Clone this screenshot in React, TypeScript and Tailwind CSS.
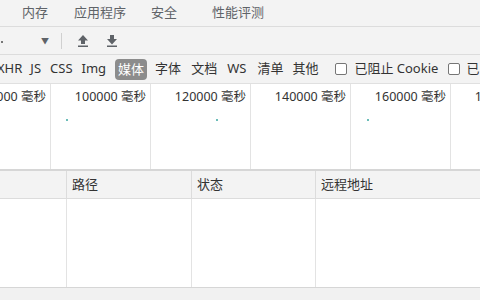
import React from 'react';

const font = { fontFamily: '"Noto Sans", "Noto Sans CJK SC", sans-serif' };

const ticks = ['80000 毫秒', '100000 毫秒', '120000 毫秒', '140000 毫秒', '160000 毫秒', '180000 毫秒'];

const Upload = () => (
  <svg width="12" height="13" viewBox="0 0 12 13" className="text-[#5f6368]">
    <path d="M6 1 L11 6.5 H8 V10 H4 V6.5 H1 Z" fill="currentColor" />
    <rect x="1" y="11.5" width="10" height="1.5" fill="currentColor" />
  </svg>
);

const Download = () => (
  <svg width="12" height="13" viewBox="0 0 12 13" className="text-[#5f6368]">
    <path d="M6 10.5 L11 5 H8 V1 H4 V5 H1 Z" fill="currentColor" />
    <rect x="1" y="11.5" width="10" height="1.5" fill="currentColor" />
  </svg>
);

const Checkbox = () => (
  <span className="inline-block w-[12px] h-[12px] rounded-[2px] border border-[#767676] bg-white" />
);

export default function App() {
  return (
    <div className="relative w-[480px] h-[300px] overflow-hidden bg-[#f3f3f3] text-[13px] text-[#333] flex flex-col" style={font}>
      {/* tabs */}
      <div className="h-[27px] shrink-0 flex items-center border-b border-[#dcdcdc] text-[#5f6368]">
        <span className="ml-[22px]">内存</span>
        <span className="ml-[26px]">应用程序</span>
        <span className="ml-[25px]">安全</span>
        <span className="ml-[35px]">性能评测</span>
      </div>

      {/* toolbar */}
      <div className="h-[28px] shrink-0 flex items-center border-b border-[#dcdcdc]">
        <span className="ml-[1px] w-[2px] h-[2px] bg-[#777] self-center mt-[2px]" />
        <span className="ml-[38px] text-[8px] text-[#5f6368]">▼</span>
        <span className="ml-[12px] w-px h-[16px] bg-[#d0d0d0]" />
        <span className="ml-[15px] flex"><Upload /></span>
        <span className="ml-[17px] flex"><Download /></span>
      </div>

      {/* filters */}
      <div className="h-[28px] shrink-0 flex items-center whitespace-nowrap">
        <span className="ml-[-3px]">XHR</span>
        <span className="ml-[8px]">JS</span>
        <span className="ml-[9px]">CSS</span>
        <span className="ml-[9px]">Img</span>
        <span className="ml-[9px] px-[3px] rounded-[4px] bg-[#8c8c8c] text-white leading-[21px]">媒体</span>
        <span className="ml-[8px]">字体</span>
        <span className="ml-[10px]">文档</span>
        <span className="ml-[10px]">WS</span>
        <span className="ml-[11px]">清单</span>
        <span className="ml-[9px]">其他</span>
        <span className="ml-[17px] flex"><Checkbox /></span>
        <span className="ml-[7px]">已阻止 Cookie</span>
        <span className="ml-[10px] flex"><Checkbox /></span>
        <span className="ml-[6px]">已</span>
      </div>

      {/* overview timeline */}
      <div className="h-[88px] shrink-0 flex bg-white border-t border-[#e0e0e0] border-b-[2px] border-b-[#d6d6d6] text-[12.5px]">
        {ticks.map((t, i) => (
          <div
            key={i}
            className={`shrink-0 h-full border-r border-[#e3e3e3] ${i === 0 ? 'w-[51px]' : 'w-[100px]'}`}
          >
            <div className="flex justify-end whitespace-nowrap pr-[4px] pt-[4px] leading-[18px]">{t}</div>
          </div>
        ))}
      </div>

      {/* table header */}
      <div className="h-[28px] shrink-0 flex border-b border-[#dcdcdc]">
        <div className="w-[67px] border-r border-[#dcdcdc]" />
        <div className="w-[125px] border-r border-[#dcdcdc] pl-[5px] flex items-center">路径</div>
        <div className="w-[124px] border-r border-[#dcdcdc] pl-[5px] flex items-center">状态</div>
        <div className="flex-1 pl-[5px] flex items-center">远程地址</div>
      </div>

      {/* body */}
      <div className="h-[89px] shrink-0 flex bg-white border-b border-[#d6d6d6]">
        <div className="w-[67px] border-r border-[#e3e3e3]" />
        <div className="w-[125px] border-r border-[#e3e3e3]" />
        <div className="w-[124px] border-r border-[#e3e3e3]" />
        <div className="flex-1" />
      </div>

      <div className="flex-1 bg-[#f1f1f1]" />

      {/* dots on timeline */}
      <span className="absolute left-[66px] top-[119px] w-[2px] h-[2px] rounded-full bg-[#3aa7a0]" />
      <span className="absolute left-[216px] top-[119px] w-[2px] h-[2px] rounded-full bg-[#3aa7a0]" />
      <span className="absolute left-[367px] top-[119px] w-[2px] h-[2px] rounded-full bg-[#3aa7a0]" />
    </div>
  );
}
